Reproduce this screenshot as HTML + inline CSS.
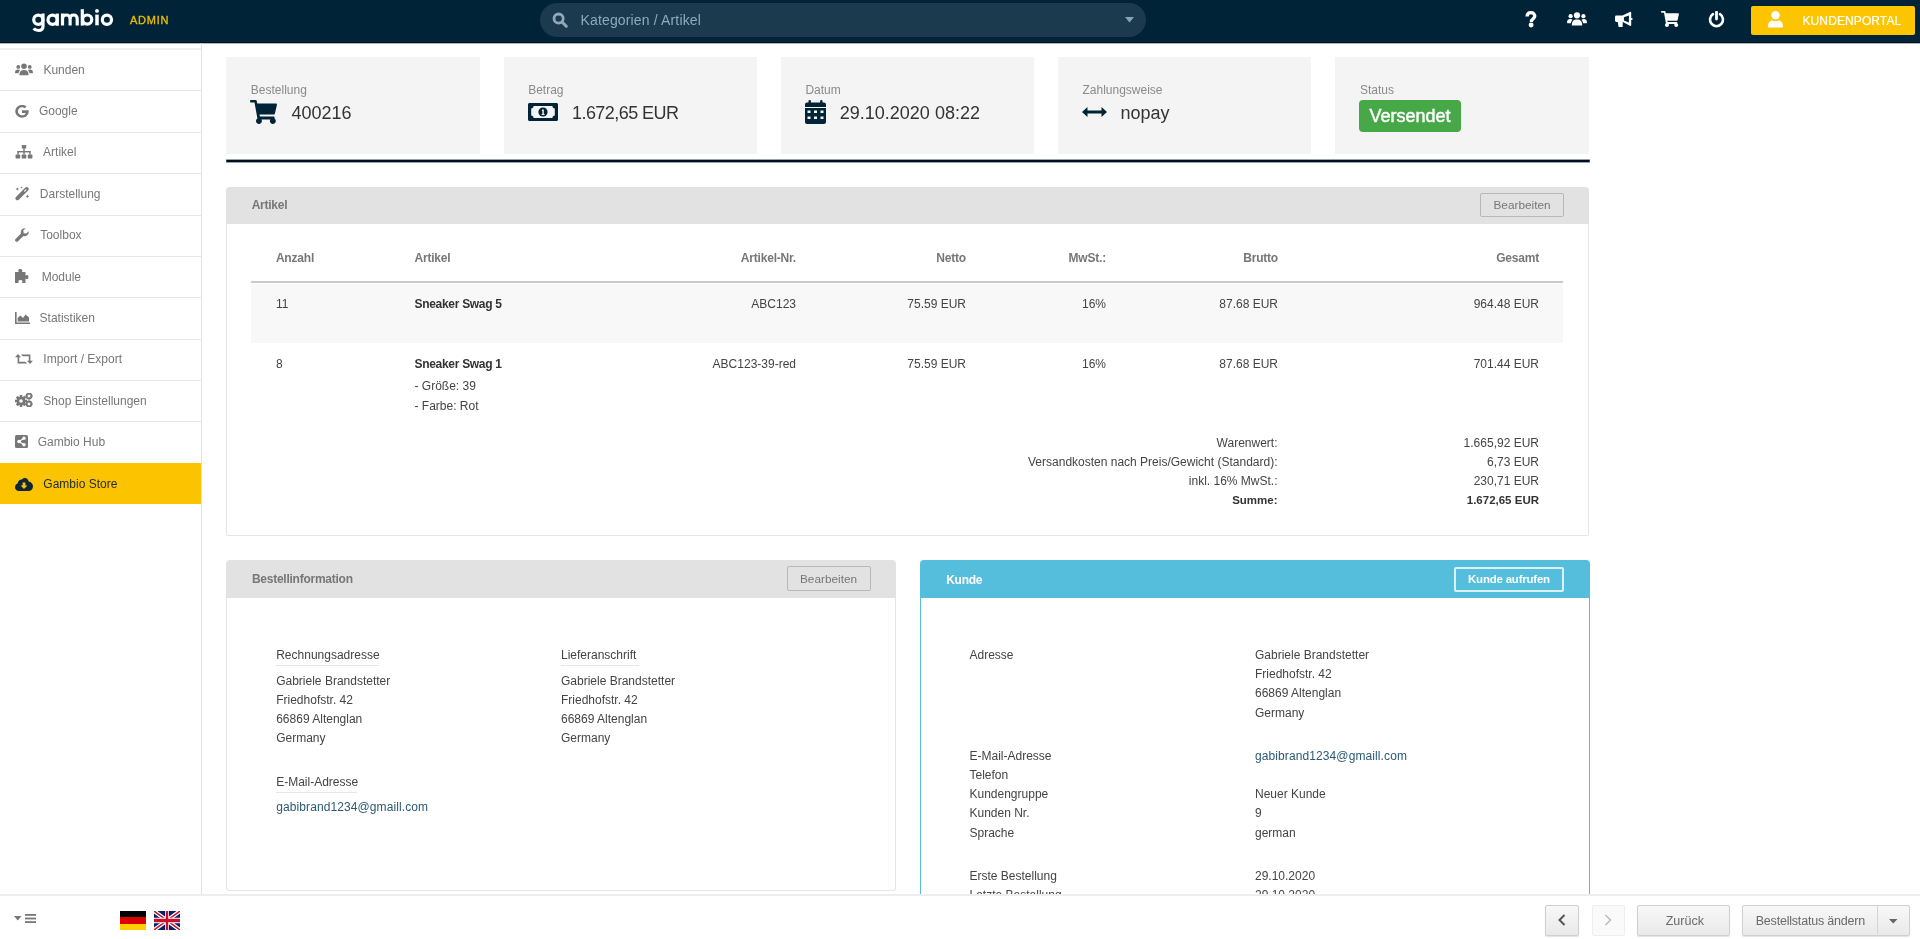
<!DOCTYPE html>
<html><head><meta charset="utf-8"><title>Gambio Admin</title>
<style>
html,body{margin:0;padding:0;}
body{width:1920px;height:939px;overflow:hidden;position:relative;background:#fff;font-family:"Liberation Sans", sans-serif;}
.t{position:absolute;white-space:nowrap;}
#wrap{position:absolute;left:0;top:0;width:1920px;height:939px;overflow:hidden;will-change:transform;}
svg{display:block;}
</style></head><body><div id="wrap">
<div style="position:absolute;left:0px;top:0px;width:1920px;height:43px;background:#002337;"></div>
<div style="position:absolute;left:0px;top:42px;width:1920px;height:1px;background:#001020;"></div>
<div style="position:absolute;left:0px;top:43px;width:1920px;height:1px;background:rgba(0,16,32,0.3);"></div>
<svg style="position:absolute;left:0px;top:0px" width="120" height="40" viewBox="0 0 120 40" fill="none" ><g fill="none" stroke="#fff" stroke-width="3.2"><circle cx="38.3" cy="19.75" r="4.6"/><path d="M43 13.6 V26.3 C43 29.2 40.9 30.5 38.3 30.5 C36.3 30.5 34.7 29.8 33.7 28.4"/><circle cx="52.6" cy="19.75" r="4.6"/><path d="M57.3 13.6 V25.8"/><path d="M62.5 25.6 V13.4 M62.5 19 C62.5 16.4 64.2 15 66.3 15 C68.5 15 70.1 16.4 70.1 19 V25.6 M70.1 19 C70.1 16.4 71.6 15 73.6 15 C75.6 15 77.2 16.4 77.2 19 V25.6"/><path d="M82.3 9.2 V25.6"/><circle cx="87.2" cy="19.6" r="4.6"/><path d="M97 14.6 V25.3" stroke-width="3.5"/><circle cx="106.9" cy="19.75" r="4.6"/></g><circle cx="97" cy="10.9" r="1.95" fill="#fff"/></svg>
<div class="t" style="top:14.59px;font-size:11px;line-height:11px;color:#e8bc00;letter-spacing:0.75px;left:130px;-webkit-text-stroke:0.35px #e8bc00;">ADMIN</div>
<div style="position:absolute;left:540px;top:3px;width:606px;height:34px;background:#1c3a4d;border-radius:17px;"></div>
<svg style="position:absolute;left:552px;top:12px" width="16" height="16" viewBox="0 0 16 16" fill="none" ><circle cx="6.6" cy="6.6" r="4.6" fill="none" stroke="#8fa9ba" stroke-width="2.8"/><path d="M10 10 L14.3 14.3" stroke="#8fa9ba" stroke-width="3" stroke-linecap="round"/></svg>
<div class="t" style="top:13.35px;font-size:14px;line-height:14px;color:#8eaabb;letter-spacing:0.15px;left:580.5px;">Kategorien / Artikel</div>
<svg style="position:absolute;left:1125px;top:17px" width="9" height="6" viewBox="0 0 9 6" fill="#8aa3b5" ><path d="M0 0 H9 L4.5 5.5 Z"/></svg>
<svg style="position:absolute;left:1525px;top:11px" width="12" height="17" viewBox="0 0 12 17" fill="#fff" ><path d="M2.1 5.6 C2.1 3 3.9 1.7 6 1.7 C8.2 1.7 9.8 3.1 9.8 5.1 C9.8 7.6 6.4 7.9 6.4 10.6 V11" fill="none" stroke="#fff" stroke-width="3.3"/><circle cx="6.1" cy="14" r="2.45"/></svg>
<svg style="position:absolute;left:1567px;top:12px" width="20" height="14" viewBox="0 0 20 14" fill="#fff" ><circle cx="10" cy="3.3" r="3.1"/><circle cx="3.6" cy="4.2" r="2.1"/><circle cx="16.4" cy="4.2" r="2.1"/><path d="M4.8 13.5 C4.8 9.5 6.5 7.6 10 7.6 C13.5 7.6 15.2 9.5 15.2 13.5 Z"/><path d="M0 10.5 C0 8 1.3 7 3.3 7 C4.3 7 5 7.3 5.6 7.8 C4.6 8.8 4 10 3.9 11.2 H0.5 Z"/><path d="M20 10.5 C20 8 18.7 7 16.7 7 C15.7 7 15 7.3 14.4 7.8 C15.4 8.8 16 10 16.1 11.2 H19.5 Z"/></svg>
<svg style="position:absolute;left:1610px;top:8px" width="24" height="22" viewBox="0 0 24 22" fill="#fff" ><rect x="5" y="7.4" width="8.3" height="6.5" rx="1.3"/><path d="M7.7 13.5 H12.8 L12.6 19 H8.6 Z"/><path d="M12.5 7.6 L19.8 4 C20.6 3.6 21.2 4 21.2 4.8 V17 C21.2 17.8 20.6 18.2 19.8 17.8 L12.5 13.8 Z M13.9 9.2 V12.4 L18.9 14.4 V7.4 Z" fill-rule="evenodd"/><circle cx="21.6" cy="10.9" r="1"/></svg>
<svg style="position:absolute;left:1661px;top:11px" width="18" height="16" viewBox="0 0 27 24" fill="#fff" ><path d="M0 1.2 C0 0.5 0.5 0 1.2 0 H5.5 C6.1 0 6.6 0.4 6.7 1 L7.3 3.5 H25.8 C26.6 3.5 27.1 4.2 26.9 5 L24.9 13.6 C24.8 14.2 24.3 14.6 23.7 14.6 H9.5 L9.9 16.6 H23.4 C24.2 16.6 24.7 17.3 24.6 18 L24.5 18.6 C25.3 19.1 25.8 20 25.8 21 C25.8 22.6 24.5 24 22.8 24 C21.2 24 19.9 22.6 19.9 21 C19.9 20.5 20 20 20.3 19.5 H11.5 C11.8 20 11.9 20.5 11.9 21 C11.9 22.6 10.6 24 8.9 24 C7.3 24 6 22.6 6 21 C6 19.9 6.6 19 7.4 18.5 L4.5 2.6 H1.2 C0.5 2.6 0 2 0 1.2 Z"/></svg>
<svg style="position:absolute;left:1708px;top:11px" width="17" height="17" viewBox="0 0 17 17" fill="none" ><path d="M5 3.2 A6.5 6.5 0 1 0 12 3.2" fill="none" stroke="#fff" stroke-width="2.6" stroke-linecap="round"/><path d="M8.5 1 V8" stroke="#fff" stroke-width="2.8" stroke-linecap="round"/></svg>
<div style="position:absolute;left:1751px;top:6px;width:164px;height:29px;background:#fcc500;border-radius:2px;"></div>
<svg style="position:absolute;left:1768px;top:11px" width="15" height="17" viewBox="0 0 15 17" fill="#fff" ><circle cx="7.5" cy="4.3" r="4.2"/><path d="M0 15.3 C0 11.3 2.5 9.5 4.5 9.5 C5.4 10 6.4 10.3 7.5 10.3 C8.6 10.3 9.6 10 10.5 9.5 C12.5 9.5 15 11.3 15 15.3 C15 16.2 14.4 16.6 13.6 16.6 H1.4 C0.6 16.6 0 16.2 0 15.3 Z"/></svg>
<div class="t" style="top:14.94px;font-size:12px;line-height:12px;color:#fff;letter-spacing:0.1px;left:1802.5px;-webkit-text-stroke:0.2px #fff;">KUNDENPORTAL</div>
<div style="position:absolute;left:201px;top:43px;width:1px;height:852px;background:#e3e3e3;"></div>
<div style="position:absolute;left:0px;top:48px;width:201px;height:2px;background:#efefef;"></div>
<div style="position:absolute;left:0px;top:90px;width:201px;height:1px;background:#e6e6e6;"></div>
<div class="t" style="top:63.74px;font-size:12px;line-height:12px;color:#777;left:43.4px;">Kunden</div>
<svg style="position:absolute;left:15px;top:63px" width="18" height="13" viewBox="0 0 20 14" fill="#777" ><circle cx="10" cy="3.3" r="3.1"/><circle cx="3.6" cy="4.2" r="2.1"/><circle cx="16.4" cy="4.2" r="2.1"/><path d="M4.8 13.5 C4.8 9.5 6.5 7.6 10 7.6 C13.5 7.6 15.2 9.5 15.2 13.5 Z"/><path d="M0 10.5 C0 8 1.3 7 3.3 7 C4.3 7 5 7.3 5.6 7.8 C4.6 8.8 4 10 3.9 11.2 H0.5 Z"/><path d="M20 10.5 C20 8 18.7 7 16.7 7 C15.7 7 15 7.3 14.4 7.8 C15.4 8.8 16 10 16.1 11.2 H19.5 Z"/></svg>
<div style="position:absolute;left:0px;top:132px;width:201px;height:1px;background:#e6e6e6;"></div>
<div class="t" style="top:105.10px;font-size:12px;line-height:12px;color:#777;left:38.9px;">Google</div>
<svg style="position:absolute;left:15px;top:105px" width="14" height="13" viewBox="0 0 14 13" fill="#777" ><path d="M13.6 5.3 H7 V7.9 H10.7 C10.3 9.5 9 10.3 7 10.3 C4.7 10.3 2.9 8.5 2.9 6.3 C2.9 4.1 4.7 2.3 7 2.3 C8 2.3 8.9 2.7 9.6 3.3 L11.5 1.5 C10.3 0.5 8.8 -0.1 7 -0.1 C3.4 -0.1 0.3 2.8 0.3 6.3 C0.3 9.8 3.4 12.7 7 12.7 C10.6 12.7 13.7 10.3 13.7 6.3 C13.7 6 13.7 5.6 13.6 5.3 Z"/></svg>
<div style="position:absolute;left:0px;top:173px;width:201px;height:1px;background:#e6e6e6;"></div>
<div class="t" style="top:146.46px;font-size:12px;line-height:12px;color:#777;left:43.1px;">Artikel</div>
<svg style="position:absolute;left:15px;top:145px" width="18" height="14" viewBox="0 0 18 14" fill="#777" ><rect x="6.8" y="0" width="4.4" height="3.6" rx="0.6"/><rect x="8.3" y="3.3" width="1.4" height="4"/><rect x="2.4" y="6" width="13.2" height="1.4"/><rect x="2.4" y="6" width="1.4" height="3.5"/><rect x="14.2" y="6" width="1.4" height="3.5"/><rect x="8.3" y="6" width="1.4" height="3.5"/><rect x="0.6" y="9.6" width="4.6" height="4" rx="0.7"/><rect x="6.7" y="9.6" width="4.6" height="4" rx="0.7"/><rect x="12.8" y="9.6" width="4.6" height="4" rx="0.7"/></svg>
<div style="position:absolute;left:0px;top:215px;width:201px;height:1px;background:#e6e6e6;"></div>
<div class="t" style="top:187.82px;font-size:12px;line-height:12px;color:#777;left:39.8px;">Darstellung</div>
<svg style="position:absolute;left:15px;top:186px" width="15" height="15" viewBox="0 0 15 15" fill="#777" ><path d="M2.4 12.3 L11.7 3" stroke="#777" stroke-width="3.9" stroke-linecap="round"/><path d="M9.6 5.1 L10.9 3.8" stroke="#fff" stroke-width="1.2" stroke-linecap="round"/><path d="M2.3 1.2 L2.9 2.5 L4.2 3 L2.9 3.5 L2.3 4.8 L1.7 3.5 L0.4 3 L1.7 2.5 Z"/><path d="M6.4 0.4 L6.8 1.2 L7.6 1.6 L6.8 2 L6.4 2.8 L6 2 L5.2 1.6 L6 1.2 Z"/><path d="M12.3 8.6 L12.9 9.9 L14.2 10.4 L12.9 10.9 L12.3 12.2 L11.7 10.9 L10.4 10.4 L11.7 9.9 Z"/></svg>
<div style="position:absolute;left:0px;top:256px;width:201px;height:1px;background:#e6e6e6;"></div>
<div class="t" style="top:229.18px;font-size:12px;line-height:12px;color:#777;left:40.2px;">Toolbox</div>
<svg style="position:absolute;left:15px;top:228px" width="14" height="14" viewBox="0 0 14 14" fill="#777" ><path d="M13.6 3.3 C13.9 4.6 13.5 6 12.5 7 C11.4 8.1 9.8 8.4 8.4 7.9 L3 13.3 C2.3 14 1.2 14 0.6 13.3 C-0.1 12.7 -0.1 11.6 0.6 10.9 L6 5.5 C5.5 4.1 5.8 2.5 6.9 1.4 C7.9 0.4 9.3 0 10.6 0.3 L8.3 2.6 L8.7 5.2 L11.3 5.6 Z"/></svg>
<div style="position:absolute;left:0px;top:297px;width:201px;height:1px;background:#e6e6e6;"></div>
<div class="t" style="top:270.54px;font-size:12px;line-height:12px;color:#777;left:41.7px;">Module</div>
<svg style="position:absolute;left:15px;top:269px" width="16" height="14" viewBox="0 0 16 14" fill="#777" ><path d="M0 3 H3.8 C3.4 2.6 3.2 2.1 3.2 1.6 C3.2 0.7 4.1 0 5.3 0 C6.5 0 7.4 0.7 7.4 1.6 C7.4 2.1 7.2 2.6 6.8 3 H10.5 V6.5 C10.9 6.1 11.4 5.9 11.9 5.9 C12.8 5.9 13.5 6.8 13.5 8 C13.5 9.2 12.8 10.1 11.9 10.1 C11.4 10.1 10.9 9.9 10.5 9.5 V14 H6.9 C7.3 13.6 7.5 13.1 7.5 12.6 C7.5 11.7 6.6 11 5.4 11 C4.2 11 3.3 11.7 3.3 12.6 C3.3 13.1 3.5 13.6 3.9 14 H0 Z"/></svg>
<div style="position:absolute;left:0px;top:339px;width:201px;height:1px;background:#e6e6e6;"></div>
<div class="t" style="top:311.90px;font-size:12px;line-height:12px;color:#777;left:39.6px;">Statistiken</div>
<svg style="position:absolute;left:15px;top:312px" width="15" height="12" viewBox="0 0 15 12" fill="#777" ><path d="M0 0 H1.6 V10.4 H15 V12 H0 Z"/><path d="M2.6 9.6 V6 L5.5 3.5 L8 6 L10.5 2.5 L14 5.5 V9.6 Z"/></svg>
<div style="position:absolute;left:0px;top:380px;width:201px;height:1px;background:#e6e6e6;"></div>
<div class="t" style="top:353.26px;font-size:12px;line-height:12px;color:#777;left:43.3px;">Import / Export</div>
<svg style="position:absolute;left:15px;top:353px" width="18" height="12" viewBox="0 0 18 12" fill="#777" ><path d="M3 1 L6 4.2 H4.2 V8.8 H10.5 L12 10.4 H2.6 V4.2 H0 Z"/><path d="M15 11 L12 7.8 H13.8 V3.2 H7.5 L6 1.6 H15.4 V7.8 H18 Z"/></svg>
<div style="position:absolute;left:0px;top:421px;width:201px;height:1px;background:#e6e6e6;"></div>
<div class="t" style="top:394.62px;font-size:12px;line-height:12px;color:#777;left:43.3px;">Shop Einstellungen</div>
<svg style="position:absolute;left:15px;top:393px" width="18" height="14" viewBox="0 0 18 14" fill="#777" ><g transform="translate(6,8)"><circle r="4.3"/><g id="tt"><rect x="-1.3" y="-6" width="2.6" height="12"/><rect x="-6" y="-1.3" width="12" height="2.6"/><rect x="-1.3" y="-6" width="2.6" height="12" transform="rotate(45)"/><rect x="-1.3" y="-6" width="2.6" height="12" transform="rotate(-45)"/></g><circle r="1.8" fill="#fff"/></g><g transform="translate(14,3)"><circle r="2.6" fill="none" stroke="#777" stroke-width="1.6"/><rect x="-0.7" y="-3.6" width="1.4" height="7.2"/><rect x="-3.6" y="-0.7" width="7.2" height="1.4"/><circle r="1.2" fill="#fff"/></g><g transform="translate(14,11)"><circle r="2.6" fill="none" stroke="#777" stroke-width="1.6"/><rect x="-0.7" y="-3.6" width="1.4" height="7.2"/><rect x="-3.6" y="-0.7" width="7.2" height="1.4"/><circle r="1.2" fill="#fff"/></g></svg>
<div style="position:absolute;left:0px;top:463px;width:201px;height:1px;background:#e6e6e6;"></div>
<div class="t" style="top:435.98px;font-size:12px;line-height:12px;color:#777;left:37.7px;">Gambio Hub</div>
<svg style="position:absolute;left:15px;top:435px" width="13" height="13" viewBox="0 0 13 13" fill="#777" ><rect x="0" y="0" width="13" height="13" rx="1.5"/><circle cx="9" cy="3.3" r="1.7" fill="#fff"/><circle cx="4" cy="6.5" r="1.7" fill="#fff"/><circle cx="9" cy="9.7" r="1.7" fill="#fff"/><path d="M9 3.3 L4 6.5 L9 9.7" stroke="#fff" stroke-width="1.1" fill="none"/></svg>
<div style="position:absolute;left:0px;top:463px;width:201px;height:41px;background:#fcc400;"></div>
<div class="t" style="top:478.34px;font-size:12px;line-height:12px;color:#1f2a30;left:43.3px;">Gambio Store</div>
<svg style="position:absolute;left:15px;top:478px" width="18" height="13" viewBox="0 0 18 13" fill="#0f2638" ><path d="M4 13 C1.8 13 0 11.3 0 9.2 C0 7.5 1.1 6.1 2.7 5.6 C2.8 3.2 4.6 1.5 6.8 1.5 C7.5 0.6 8.6 0 9.8 0 C11.9 0 13.5 1.6 13.6 3.6 C16.1 3.9 18 6 18 8.5 C18 11 16 13 13.5 13 Z"/><path d="M7.6 4.5 H10.4 V7.5 H12.4 L9 11 L5.6 7.5 H7.6 Z" fill="#fcc400"/></svg>
<div style="position:absolute;left:226px;top:57px;width:253.5px;height:96.5px;background:#f4f4f4;"></div>
<div style="position:absolute;left:504px;top:57px;width:253px;height:96.5px;background:#f4f4f4;"></div>
<div style="position:absolute;left:781px;top:57px;width:253px;height:96.5px;background:#f4f4f4;"></div>
<div style="position:absolute;left:1058px;top:57px;width:253px;height:96.5px;background:#f4f4f4;"></div>
<div style="position:absolute;left:1335px;top:57px;width:254px;height:96.5px;background:#f4f4f4;"></div>
<div style="position:absolute;left:226px;top:159px;width:1364px;height:1px;background:rgba(0,25,45,0.4);border-radius:1px;"></div>
<div style="position:absolute;left:226px;top:160px;width:1364px;height:2px;background:#000f1f;border-radius:1px;"></div>
<div style="position:absolute;left:226px;top:162px;width:1364px;height:1px;background:rgba(0,25,45,0.4);border-radius:1px;"></div>
<div class="t" style="top:83.84px;font-size:12px;line-height:12px;color:#8a8a8a;left:250.8px;">Bestellung</div>
<svg style="position:absolute;left:250px;top:100px" width="27" height="24" viewBox="0 0 27 24" fill="#002337" ><path d="M0 1.2 C0 0.5 0.5 0 1.2 0 H5.5 C6.1 0 6.6 0.4 6.7 1 L7.3 3.5 H25.8 C26.6 3.5 27.1 4.2 26.9 5 L24.9 13.6 C24.8 14.2 24.3 14.6 23.7 14.6 H9.5 L9.9 16.6 H23.4 C24.2 16.6 24.7 17.3 24.6 18 L24.5 18.6 C25.3 19.1 25.8 20 25.8 21 C25.8 22.6 24.5 24 22.8 24 C21.2 24 19.9 22.6 19.9 21 C19.9 20.5 20 20 20.3 19.5 H11.5 C11.8 20 11.9 20.5 11.9 21 C11.9 22.6 10.6 24 8.9 24 C7.3 24 6 22.6 6 21 C6 19.9 6.6 19 7.4 18.5 L4.5 2.6 H1.2 C0.5 2.6 0 2 0 1.2 Z"/></svg>
<div class="t" style="top:103.76px;font-size:18px;line-height:18px;color:#333;left:291.5px;">400216</div>
<div class="t" style="top:83.84px;font-size:12px;line-height:12px;color:#8a8a8a;left:528.2px;">Betrag</div>
<svg style="position:absolute;left:528px;top:103px" width="30" height="18" viewBox="0 0 30 18" fill="#002337" ><path d="M0 1.5 C0 0.7 0.7 0 1.5 0 H28.5 C29.3 0 30 0.7 30 1.5 V16.5 C30 17.3 29.3 18 28.5 18 H1.5 C0.7 18 0 17.3 0 16.5 Z M3.2 5.5 V12.5 C4.6 12.5 5.6 13.6 5.6 15 H24.4 C24.4 13.6 25.5 12.5 26.8 12.5 V5.5 C25.5 5.5 24.4 4.4 24.4 3 H5.6 C5.6 4.4 4.6 5.5 3.2 5.5 Z" fill-rule="evenodd"/><circle cx="15" cy="9" r="4.6"/><path d="M14.1 6.6 H15.8 V10.9 H16.6 V12 H13.6 V10.9 H14.4 V8 H13.8 Z" fill="#f4f4f4"/></svg>
<div class="t" style="top:103.76px;font-size:18px;line-height:18px;color:#333;letter-spacing:-0.55px;left:572px;">1.672,65 EUR</div>
<div class="t" style="top:83.84px;font-size:12px;line-height:12px;color:#8a8a8a;left:805.4px;">Datum</div>
<svg style="position:absolute;left:805px;top:100px" width="21" height="24" viewBox="0 0 21 24" fill="#002337" ><rect x="3.5" y="0" width="2.4" height="4" rx="1"/><rect x="15.1" y="0" width="2.4" height="4" rx="1"/><path d="M0 4.5 C0 3.4 0.9 2.6 2 2.6 H19 C20.1 2.6 21 3.4 21 4.5 V7 H0 Z"/><path d="M0 8 H21 V22 C21 23.1 20.1 24 19 24 H2 C0.9 24 0 23.1 0 22 Z M2.5 10.5 V13 H5.5 V10.5 Z M9 10.5 V13 H12 V10.5 Z M15.5 10.5 V13 H18.5 V10.5 Z M2.5 16.5 V19 H5.5 V16.5 Z M9 16.5 V19 H12 V16.5 Z M15.5 16.5 V19 H18.5 V16.5 Z" fill-rule="evenodd"/></svg>
<div class="t" style="top:103.76px;font-size:18px;line-height:18px;color:#333;left:839.8px;">29.10.2020 08:22</div>
<div class="t" style="top:83.84px;font-size:12px;line-height:12px;color:#8a8a8a;left:1082.5px;">Zahlungsweise</div>
<svg style="position:absolute;left:1082px;top:107px" width="25" height="10" viewBox="0 0 25 10" fill="#002337" ><path d="M0 5 L5.5 0 V3.5 H19.5 V0 L25 5 L19.5 10 V6.5 H5.5 V10 Z"/></svg>
<div class="t" style="top:103.51px;font-size:18px;line-height:18px;color:#333;left:1120.4px;">nopay</div>
<div class="t" style="top:83.84px;font-size:12px;line-height:12px;color:#8a8a8a;left:1360px;">Status</div>
<div style="position:absolute;left:1359px;top:100px;width:102px;height:32px;background:#47a847;border-radius:4px;"></div>
<div class="t" style="top:106.76px;font-size:18px;line-height:18px;color:#fff;left:1369.5px;-webkit-text-stroke:0.45px #fff;">Versendet</div>
<div style="position:absolute;left:226px;top:205px;width:1363px;height:331px;border:1px solid #e5e5e5;border-top:none;box-sizing:border-box;border-radius:0 0 2px 2px;"></div>
<div style="position:absolute;left:226px;top:187px;width:1363px;height:37px;background:#e2e2e2;border-radius:4px 4px 0 0;"></div>
<div class="t" style="top:198.84px;font-size:12px;line-height:12px;color:#777;font-weight:bold;letter-spacing:-0.25px;left:251.7px;">Artikel</div>
<div style="position:absolute;left:1480px;top:193px;width:84px;height:24px;border:1px solid #b8b8b8;box-sizing:border-box;border-radius:2px;"></div>
<div class="t" style="top:199.91px;font-size:11.8px;line-height:11.8px;color:#777;left:1493.5px;">Bearbeiten</div>
<div class="t" style="top:252.14px;font-size:12px;line-height:12px;color:#777;font-weight:bold;letter-spacing:-0.2px;left:275.9px;">Anzahl</div>
<div class="t" style="top:252.14px;font-size:12px;line-height:12px;color:#777;font-weight:bold;letter-spacing:-0.2px;left:414.5px;">Artikel</div>
<div class="t" style="top:252.14px;font-size:12px;line-height:12px;color:#777;font-weight:bold;letter-spacing:-0.2px;right:1124.00px;">Artikel-Nr.</div>
<div class="t" style="top:252.14px;font-size:12px;line-height:12px;color:#777;font-weight:bold;letter-spacing:-0.2px;right:954.00px;">Netto</div>
<div class="t" style="top:252.14px;font-size:12px;line-height:12px;color:#777;font-weight:bold;letter-spacing:-0.2px;right:814.00px;">MwSt.:</div>
<div class="t" style="top:252.14px;font-size:12px;line-height:12px;color:#777;font-weight:bold;letter-spacing:-0.2px;right:642.00px;">Brutto</div>
<div class="t" style="top:252.14px;font-size:12px;line-height:12px;color:#777;font-weight:bold;letter-spacing:-0.2px;right:381.00px;">Gesamt</div>
<div style="position:absolute;left:251px;top:281px;width:1312px;height:2px;background:#c9c9c9;"></div>
<div style="position:absolute;left:251px;top:284px;width:1312px;height:59px;background:#f8f8f8;"></div>
<div class="t" style="top:297.64px;font-size:12px;line-height:12px;color:#444;left:275.9px;">11</div>
<div class="t" style="top:297.64px;font-size:12px;line-height:12px;color:#333;font-weight:bold;letter-spacing:-0.3px;left:414.5px;">Sneaker Swag 5</div>
<div class="t" style="top:297.64px;font-size:12px;line-height:12px;color:#444;right:1124.00px;">ABC123</div>
<div class="t" style="top:297.64px;font-size:12px;line-height:12px;color:#444;right:954.00px;">75.59 EUR</div>
<div class="t" style="top:297.64px;font-size:12px;line-height:12px;color:#444;right:814.00px;">16%</div>
<div class="t" style="top:297.64px;font-size:12px;line-height:12px;color:#444;right:642.00px;">87.68 EUR</div>
<div class="t" style="top:297.64px;font-size:12px;line-height:12px;color:#444;right:381.00px;">964.48 EUR</div>
<div class="t" style="top:358.44px;font-size:12px;line-height:12px;color:#444;left:275.9px;">8</div>
<div class="t" style="top:358.44px;font-size:12px;line-height:12px;color:#333;font-weight:bold;letter-spacing:-0.3px;left:414.5px;">Sneaker Swag 1</div>
<div class="t" style="top:358.44px;font-size:12px;line-height:12px;color:#444;right:1124.00px;">ABC123-39-red</div>
<div class="t" style="top:358.44px;font-size:12px;line-height:12px;color:#444;right:954.00px;">75.59 EUR</div>
<div class="t" style="top:358.44px;font-size:12px;line-height:12px;color:#444;right:814.00px;">16%</div>
<div class="t" style="top:358.44px;font-size:12px;line-height:12px;color:#444;right:642.00px;">87.68 EUR</div>
<div class="t" style="top:358.44px;font-size:12px;line-height:12px;color:#444;right:381.00px;">701.44 EUR</div>
<div class="t" style="top:380.44px;font-size:12px;line-height:12px;color:#444;left:414.5px;">- Größe: 39</div>
<div class="t" style="top:399.54px;font-size:12px;line-height:12px;color:#444;left:414.5px;">- Farbe: Rot</div>
<div class="t" style="top:437.04px;font-size:12px;line-height:12px;color:#444;right:642.50px;">Warenwert:</div>
<div class="t" style="top:437.04px;font-size:12px;line-height:12px;color:#444;right:381.00px;">1.665,92 EUR</div>
<div class="t" style="top:456.14px;font-size:12px;line-height:12px;color:#444;right:642.50px;">Versandkosten nach Preis/Gewicht (Standard):</div>
<div class="t" style="top:456.14px;font-size:12px;line-height:12px;color:#444;right:381.00px;">6,73 EUR</div>
<div class="t" style="top:475.24px;font-size:12px;line-height:12px;color:#444;right:642.50px;">inkl. 16% MwSt.:</div>
<div class="t" style="top:475.24px;font-size:12px;line-height:12px;color:#444;right:381.00px;">230,71 EUR</div>
<div class="t" style="top:494.77px;font-size:11.5px;line-height:11.5px;color:#333;font-weight:bold;right:642.50px;">Summe:</div>
<div class="t" style="top:494.77px;font-size:11.5px;line-height:11.5px;color:#333;font-weight:bold;right:381.00px;">1.672,65 EUR</div>
<div style="position:absolute;left:226px;top:580px;width:670px;height:311px;border:1px solid #e5e5e5;border-top:none;box-sizing:border-box;border-radius:0 0 3px 3px;"></div>
<div style="position:absolute;left:226px;top:560px;width:670px;height:37.5px;background:#e2e2e2;border-radius:4px 4px 0 0;"></div>
<div class="t" style="top:572.84px;font-size:12px;line-height:12px;color:#777;font-weight:bold;letter-spacing:-0.25px;left:251.9px;">Bestellinformation</div>
<div style="position:absolute;left:787px;top:566px;width:84px;height:25px;border:1px solid #b8b8b8;box-sizing:border-box;border-radius:2px;"></div>
<div class="t" style="top:573.81px;font-size:11.8px;line-height:11.8px;color:#777;left:800px;">Bearbeiten</div>
<div class="t" style="top:649.04px;font-size:12px;line-height:12px;color:#444;left:276.2px;">Rechnungsadresse</div>
<div style="position:absolute;left:276px;top:665px;width:103px;height:1px;background:#e6e6e6;"></div>
<div class="t" style="top:649.04px;font-size:12px;line-height:12px;color:#444;left:561px;">Lieferanschrift</div>
<div style="position:absolute;left:561px;top:665px;width:78px;height:1px;background:#e6e6e6;"></div>
<div class="t" style="top:674.54px;font-size:12px;line-height:12px;color:#444;left:276.2px;">Gabriele Brandstetter</div>
<div class="t" style="top:674.54px;font-size:12px;line-height:12px;color:#444;left:561px;">Gabriele Brandstetter</div>
<div class="t" style="top:693.74px;font-size:12px;line-height:12px;color:#444;left:276.2px;">Friedhofstr. 42</div>
<div class="t" style="top:693.74px;font-size:12px;line-height:12px;color:#444;left:561px;">Friedhofstr. 42</div>
<div class="t" style="top:712.94px;font-size:12px;line-height:12px;color:#444;left:276.2px;">66869 Altenglan</div>
<div class="t" style="top:712.94px;font-size:12px;line-height:12px;color:#444;left:561px;">66869 Altenglan</div>
<div class="t" style="top:732.14px;font-size:12px;line-height:12px;color:#444;left:276.2px;">Germany</div>
<div class="t" style="top:732.14px;font-size:12px;line-height:12px;color:#444;left:561px;">Germany</div>
<div class="t" style="top:775.54px;font-size:12px;line-height:12px;color:#444;left:276.2px;">E-Mail-Adresse</div>
<div style="position:absolute;left:276px;top:792px;width:81px;height:1px;background:#e6e6e6;"></div>
<div class="t" style="top:801.24px;font-size:12px;line-height:12px;color:#2b5a72;letter-spacing:0.1px;left:276.2px;">gabibrand1234@gmaill.com</div>
<div style="position:absolute;left:920px;top:580px;width:670px;height:380px;border:1px solid #54bedc;border-top:none;box-sizing:border-box;"></div>
<div style="position:absolute;left:920px;top:560px;width:670px;height:37.5px;background:#54bedc;border-radius:4px 4px 0 0;"></div>
<div class="t" style="top:573.54px;font-size:12px;line-height:12px;color:#fff;font-weight:bold;letter-spacing:-0.25px;left:946.2px;">Kunde</div>
<div style="position:absolute;left:1454px;top:567px;width:110px;height:25px;border:2px solid rgba(255,255,255,0.78);box-sizing:border-box;border-radius:2px;"></div>
<div class="t" style="top:573.97px;font-size:11.5px;line-height:11.5px;color:#fff;font-weight:bold;letter-spacing:-0.22px;left:1468px;">Kunde aufrufen</div>
<div class="t" style="top:649.04px;font-size:12px;line-height:12px;color:#444;left:1255px;">Gabriele Brandstetter</div>
<div class="t" style="top:668.24px;font-size:12px;line-height:12px;color:#444;left:1255px;">Friedhofstr. 42</div>
<div class="t" style="top:687.44px;font-size:12px;line-height:12px;color:#444;left:1255px;">66869 Altenglan</div>
<div class="t" style="top:706.64px;font-size:12px;line-height:12px;color:#444;left:1255px;">Germany</div>
<div class="t" style="top:649.04px;font-size:12px;line-height:12px;color:#444;left:969.5px;">Adresse</div>
<div class="t" style="top:749.84px;font-size:12px;line-height:12px;color:#444;left:969.5px;">E-Mail-Adresse</div>
<div class="t" style="top:749.84px;font-size:12px;line-height:12px;color:#2b5a72;letter-spacing:0.1px;left:1255px;">gabibrand1234@gmaill.com</div>
<div class="t" style="top:769.04px;font-size:12px;line-height:12px;color:#444;left:969.5px;">Telefon</div>
<div class="t" style="top:788.24px;font-size:12px;line-height:12px;color:#444;left:969.5px;">Kundengruppe</div>
<div class="t" style="top:788.24px;font-size:12px;line-height:12px;color:#444;left:1255px;">Neuer Kunde</div>
<div class="t" style="top:807.44px;font-size:12px;line-height:12px;color:#444;left:969.5px;">Kunden Nr.</div>
<div class="t" style="top:807.44px;font-size:12px;line-height:12px;color:#444;left:1255px;">9</div>
<div class="t" style="top:826.64px;font-size:12px;line-height:12px;color:#444;left:969.5px;">Sprache</div>
<div class="t" style="top:826.64px;font-size:12px;line-height:12px;color:#444;left:1255px;">german</div>
<div class="t" style="top:870.24px;font-size:12px;line-height:12px;color:#444;left:969.5px;">Erste Bestellung</div>
<div class="t" style="top:870.24px;font-size:12px;line-height:12px;color:#444;left:1255px;">29.10.2020</div>
<div class="t" style="top:889.44px;font-size:12px;line-height:12px;color:#444;left:969.5px;">Letzte Bestellung</div>
<div class="t" style="top:889.44px;font-size:12px;line-height:12px;color:#444;left:1255px;">29.10.2020</div>
<div style="position:absolute;left:0px;top:895px;width:1920px;height:44px;background:#fff;"></div>
<div style="position:absolute;left:0px;top:894px;width:1920px;height:2px;background:#eeeeee;"></div>
<svg style="position:absolute;left:14px;top:916px" width="8" height="5" viewBox="0 0 8 5" fill="#777" ><path d="M0 0 H7.5 L3.75 4.5 Z"/></svg>
<svg style="position:absolute;left:25px;top:914px" width="11" height="9" viewBox="0 0 11 9" fill="#777" ><rect x="0" y="0" width="11" height="1.8"/><rect x="0" y="3.6" width="11" height="1.8"/><rect x="0" y="7.2" width="11" height="1.8"/></svg>
<div style="position:absolute;left:120px;top:911px;width:26px;height:6.3px;background:#000;"></div>
<div style="position:absolute;left:120px;top:917.3px;width:26px;height:6.3px;background:#dd0000;"></div>
<div style="position:absolute;left:120px;top:923.6px;width:26px;height:6.4px;background:#ffce00;"></div>
<svg style="position:absolute;left:154px;top:911px" width="26" height="19" viewBox="0 0 60 30" fill="none" preserveAspectRatio="none"><clipPath id="uk"><rect width="60" height="30"/></clipPath><g clip-path="url(#uk)" preserveAspectRatio="none"><rect width="60" height="30" fill="#012169"/><path d="M0 0 L60 30 M60 0 L0 30" stroke="#fff" stroke-width="7"/><path d="M0 0 L60 30 M60 0 L0 30" stroke="#C8102E" stroke-width="2.5"/><path d="M30 0 V30 M0 15 H60" stroke="#fff" stroke-width="9"/><path d="M30 0 V30 M0 15 H60" stroke="#C8102E" stroke-width="5.5"/></g></svg>
<div style="position:absolute;left:1545px;top:905px;width:34px;height:31px;border:1px solid #cfcfcf;box-sizing:border-box;border-radius:2px;background:linear-gradient(#f8f8f8,#e9e9e9);box-shadow:0 1px 1px rgba(0,0,0,0.12);"></div>
<svg style="position:absolute;left:1558px;top:914px" width="8" height="12" viewBox="0 0 8 12" fill="none" ><path d="M6.5 1 L1.5 6 L6.5 11" stroke="#555" stroke-width="2" fill="none"/></svg>
<div style="position:absolute;left:1592px;top:905px;width:33px;height:31px;border:1px solid #eeeeee;box-sizing:border-box;border-radius:2px;background:#fafafa;"></div>
<svg style="position:absolute;left:1604px;top:914px" width="8" height="12" viewBox="0 0 8 12" fill="none" ><path d="M1.5 1 L6.5 6 L1.5 11" stroke="#bbb" stroke-width="1.5" fill="none"/></svg>
<div style="position:absolute;left:1637px;top:905px;width:93px;height:31px;border:1px solid #cfcfcf;box-sizing:border-box;border-radius:2px;background:linear-gradient(#f8f8f8,#e9e9e9);box-shadow:0 1px 1px rgba(0,0,0,0.12);"></div>
<div class="t" style="top:914.62px;font-size:12.5px;line-height:12.5px;color:#6a6a6a;left:1665.7px;">Zurück</div>
<div style="position:absolute;left:1742px;top:905px;width:168px;height:31px;border:1px solid #cfcfcf;box-sizing:border-box;border-radius:2px;background:linear-gradient(#f8f8f8,#e9e9e9);box-shadow:0 1px 1px rgba(0,0,0,0.12);"></div>
<div style="position:absolute;left:1877px;top:906px;width:1px;height:28px;background:#d5d5d5;"></div>
<div class="t" style="top:914.62px;font-size:12.5px;line-height:12.5px;color:#6a6a6a;letter-spacing:-0.2px;left:1755.7px;">Bestellstatus ändern</div>
<svg style="position:absolute;left:1889px;top:918.5px" width="9" height="5" viewBox="0 0 9 5" fill="#666" ><path d="M0 0 H8.5 L4.25 4.5 Z"/></svg>
</div></body></html>
